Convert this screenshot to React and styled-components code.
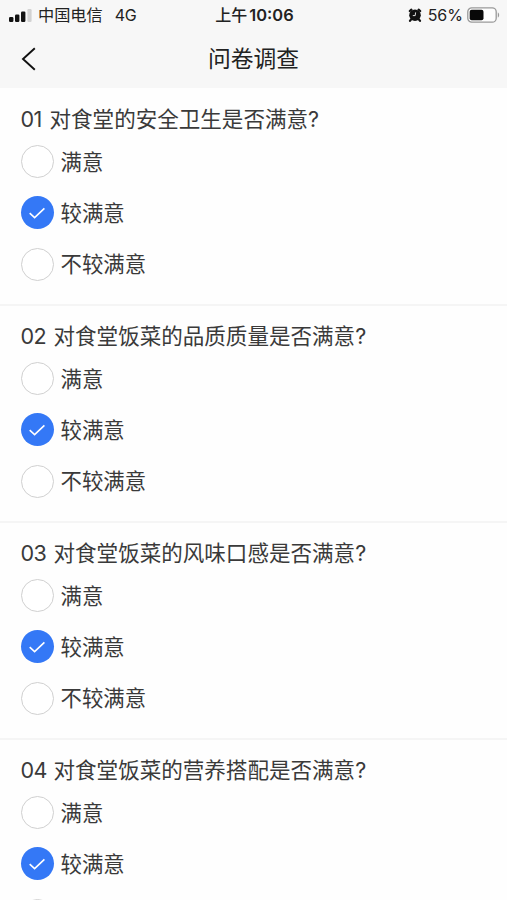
import React, { useState } from "react";
import styled, { createGlobalStyle } from "styled-components";

const GlobalStyle = createGlobalStyle`
  * {
    box-sizing: border-box;
  }
  body {
    margin: 0;
    background: #fefefe;
    font-family: Inter, "Noto Sans CJK SC", sans-serif;
    color: #3a3a3a;
  }
`;

const Page = styled.div`
  height: 900px;
  overflow: hidden;
  background: #fefefe;
`;

const Header = styled.header`
  height: 88px;
  background: #f7f7f7;
`;

const StatusBar = styled.div`
  display: grid;
  grid-template-columns: 1fr auto 1fr;
  align-items: center;
  height: 29px;
  padding: 0 7px 0 9px;
  font-size: 16px;
  line-height: 29px;
  color: #222;
`;

const StatusGroup = styled.div`
  display: flex;
  align-items: center;
  justify-content: ${(props) => (props.$end ? "flex-end" : "flex-start")};
  white-space: nowrap;
`;

const Carrier = styled.span`
  margin-left: 6px;
  padding-top: 1px;
  font-size: 16.2px;
`;

const Network = styled.span`
  margin-left: 12px;
  padding-top: 1px;
  letter-spacing: -0.4px;
`;

const Clock = styled.div`
  display: flex;
  gap: 2px;
  padding-top: 1px;
  font-weight: 500;
  span {
    font-weight: 600;
    font-size: 16.4px;
  }
`;

const Percent = styled.span`
  margin: 0 4px 0 6px;
  padding-top: 1px;
  font-size: 16px;
`;

const NavBar = styled.div`
  display: grid;
  grid-template-columns: 60px 1fr 60px;
  align-items: center;
  height: 59px;
`;

const BackButton = styled.button`
  display: flex;
  width: 60px;
  padding: 0 0 0 21px;
  border: 0;
  background: none;
`;

const Title = styled.h1`
  margin: 0;
  font-size: 22.8px;
  font-weight: 400;
  line-height: 57px;
  text-align: center;
  color: #222;
`;

const Question = styled.section`
  height: 217px;
  padding: 16px 20.5px 0;
  border-bottom: 2px solid #f5f5f5;
  &:first-of-type {
    height: 218px;
  }
  &:not(:first-of-type) {
    padding-top: 15px;
  }
`;

const QuestionTitle = styled.h2`
  display: flex;
  margin: 0 0 1px;
  font-size: 21.55px;
  font-weight: 400;
  line-height: 31px;
  white-space: nowrap;
`;

const Number = styled.span`
  width: ${(props) => props.$width}px;
  letter-spacing: -0.5px;
`;

const Option = styled.label`
  display: flex;
  align-items: center;
  height: 51.3px;
  font-size: 21.4px;
  line-height: 30px;
`;

const Radio = styled.span`
  display: flex;
  align-items: center;
  justify-content: center;
  width: 33px;
  height: 33px;
  margin-right: 7px;
  border: ${(props) => (props.$checked ? "0" : "1.5px solid #d0d0d0")};
  border-radius: 50%;
  background: ${(props) => (props.$checked ? "#3478f6" : "#fff")};
`;

const options = ["满意", "较满意", "不较满意"];

const questions = [
  { number: "01", width: 29, text: "对食堂的安全卫生是否满意?" },
  { number: "02", width: 33, text: "对食堂饭菜的品质质量是否满意?" },
  { number: "03", width: 33, text: "对食堂饭菜的风味口感是否满意?" },
  { number: "04", width: 33, text: "对食堂饭菜的营养搭配是否满意?" },
];

function SignalIcon() {
  return (
    <svg width="23" height="13" viewBox="0 0 23 13">
      <rect x="0" y="8" width="4.4" height="5" rx="1.2" fill="#111" />
      <rect x="6" y="5.5" width="4.4" height="7.5" rx="1.2" fill="#111" />
      <rect x="12" y="2.5" width="4.4" height="10.5" rx="1.2" fill="#111" />
      <rect x="18.4" y="0" width="4.2" height="13" rx="1.2" fill="#d2d2d2" />
    </svg>
  );
}

function AlarmIcon() {
  return (
    <svg width="14" height="14" viewBox="0 0 14 14">
      <circle cx="7" cy="7.2" r="5.8" fill="#111" />
      <path
        d="M1.8 3 3.4 1.6M12.2 3 10.6 1.6M3 11.5 2 12.8M11 11.5 12 12.8"
        stroke="#111"
        strokeWidth="2.2"
        strokeLinecap="round"
      />
      <path d="M7.6 4.4 7.2 7.6H4.8" fill="none" stroke="#f7f7f7" strokeWidth="0.9" />
    </svg>
  );
}

function BatteryIcon() {
  return (
    <svg width="33" height="16" viewBox="0 0 33 16">
      <rect x="0.8" y="0.8" width="28.4" height="14.4" rx="4" fill="#fdfdfd" stroke="#999" strokeWidth="1.3" />
      <rect x="2.7" y="2.7" width="13.8" height="10.6" rx="2" fill="#080808" />
      <path d="M30.8 5.5c1.8.5 1.8 4.5 0 5z" fill="#999" />
    </svg>
  );
}

function CheckIcon() {
  return (
    <svg width="18" height="14" viewBox="0 0 18 14">
      <path d="M1.7 7.2 6.6 11.6 16.4 2.3" fill="none" stroke="#fff" strokeWidth="1.6" />
    </svg>
  );
}

export default function App() {
  const [answers, setAnswers] = useState([1, 1, 1, 1]);

  const choose = (question, option) => {
    setAnswers(answers.map((value, i) => (i === question ? option : value)));
  };

  return (
    <Page>
      <GlobalStyle />
      <Header>
        <StatusBar>
          <StatusGroup>
            <SignalIcon />
            <Carrier>中国电信</Carrier>
            <Network>4G</Network>
          </StatusGroup>
          <Clock>
            上午<span>10:06</span>
          </Clock>
          <StatusGroup $end>
            <AlarmIcon />
            <Percent>56%</Percent>
            <BatteryIcon />
          </StatusGroup>
        </StatusBar>
        <NavBar>
          <BackButton>
            <svg width="16" height="24" viewBox="0 0 16 24">
              <path d="M13.8 1.2 2 12 13.8 22.8" fill="none" stroke="#111" strokeWidth="1.9" />
            </svg>
          </BackButton>
          <Title>问卷调查</Title>
        </NavBar>
      </Header>
      {questions.map((question, i) => (
        <Question key={question.number}>
          <QuestionTitle>
            <Number $width={question.width}>{question.number}</Number>
            {question.text}
          </QuestionTitle>
          {options.map((option, j) => (
            <Option key={option} onClick={() => choose(i, j)}>
              <Radio $checked={answers[i] === j}>{answers[i] === j && <CheckIcon />}</Radio>
              {option}
            </Option>
          ))}
        </Question>
      ))}
    </Page>
  );
}
